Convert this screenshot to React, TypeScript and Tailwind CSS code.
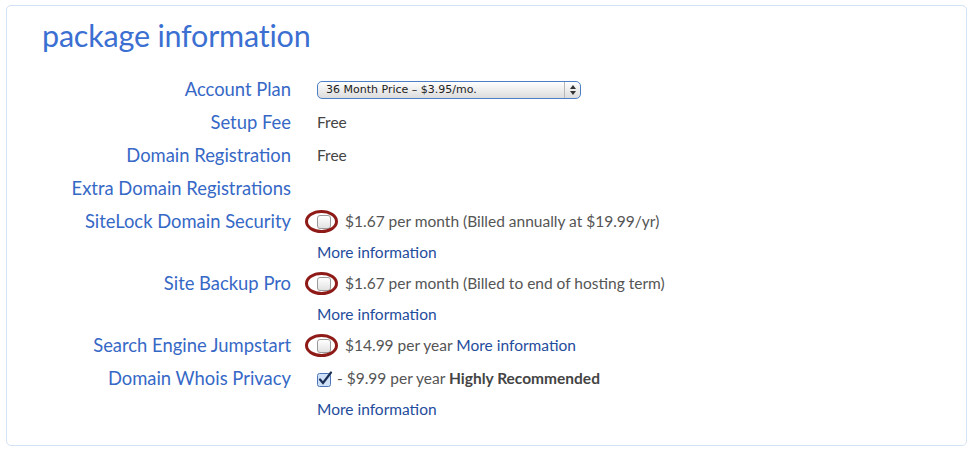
import React from 'react';

const font = { fontFamily: 'Lato, "Open Sans", sans-serif' };

const Circled: React.FC = () => (
  <span className="relative inline-flex items-center mr-[14px]">
    <span className="w-[14px] h-[14px] rounded-[3px] border border-[#9a9a9a] bg-gradient-to-b from-white to-[#e2e2e2]" />
    <span className="absolute left-[-12px] top-[-5px] w-[33px] h-[23px] rounded-[50%] border-[3px] border-[#8e1b17]" />
  </span>
);

const Checked: React.FC = () => (
  <svg width="16" height="16" viewBox="0 0 16 16" className="mr-[4px]">
    <rect x="0.5" y="2.5" width="13" height="13" rx="2" fill="#cfe0f7" stroke="#4a78b8" />
    <path d="M3 8.5 L6 12 L14 1.5" fill="none" stroke="#1a2f55" strokeWidth="2.2" strokeLinecap="round" />
  </svg>
);

const More: React.FC = () => <span className="text-[#1f4c9c]">More information</span>;

const App: React.FC = () => {
  const Label = ({ children }: { children: React.ReactNode }) => (
    <div className="text-right text-[18.4px] text-[#3668c6] h-[33px] flex items-center justify-end">{children}</div>
  );
  const Value = ({ children }: { children: React.ReactNode }) => (
    <div className="text-[15.5px] text-[#555] h-[33px] flex items-center">{children}</div>
  );

  return (
    <div className="w-[978px] h-[455px] bg-white pt-[5px] pl-[6px]" style={font}>
      <div className="w-[961px] h-[441px] border border-[#d3e2f4] rounded-[5px]">
        <h1 className="text-[30.5px] leading-none text-[#3b6fd2] pl-[35px] pt-[14px] tracking-[-0.2px]">package information</h1>
        <div className="grid grid-cols-[284px_1fr] gap-x-[26px] mt-[23px]">
          <Label>Account Plan</Label>
          <Value>
            <div className="w-[264px] h-[18px] rounded-[5px] border border-[#4d7fc6] bg-gradient-to-b from-white to-[#dcdcdc] flex items-center text-[11px] text-[#222] pl-[8px] relative" style={{ fontFamily: '"DejaVu Sans", sans-serif' }}>
              36 Month Price – $3.95/mo.
              <span className="absolute right-0 top-0 h-full w-[16px] border-l border-[#b8b8b8] flex flex-col items-center justify-center gap-[1px]">
                <svg width="6" height="10" viewBox="0 0 6 10"><path d="M0 4 L3 0 L6 4Z M0 6 L3 10 L6 6Z" fill="#333" /></svg>
              </span>
            </div>
          </Value>

          <Label>Setup Fee</Label>
          <Value><span className="text-[#444]">Free</span></Value>

          <Label>Domain Registration</Label>
          <Value><span className="text-[#444]">Free</span></Value>

          <Label>Extra Domain Registrations</Label>
          <Value>{' '}</Value>

          <Label>SiteLock Domain Security</Label>
          <Value><Circled />$1.67 per month (Billed annually at $19.99/yr)</Value>
          <div />
          <div className="h-[29px] flex items-center text-[15.5px]"><More /></div>

          <Label>Site Backup Pro</Label>
          <Value><Circled />$1.67 per month (Billed to end of hosting term)</Value>
          <div />
          <div className="h-[29px] flex items-center text-[15.5px]"><More /></div>

          <Label>Search Engine Jumpstart</Label>
          <Value><Circled />$14.99 per year&nbsp;<More /></Value>

          <Label>Domain Whois Privacy</Label>
          <Value><Checked />- $9.99 per year&nbsp;<span className="font-bold text-[#444]">Highly Recommended</span></Value>
          <div />
          <div className="h-[29px] flex items-center text-[15.5px]"><More /></div>
        </div>
      </div>
    </div>
  );
};

export default App;
